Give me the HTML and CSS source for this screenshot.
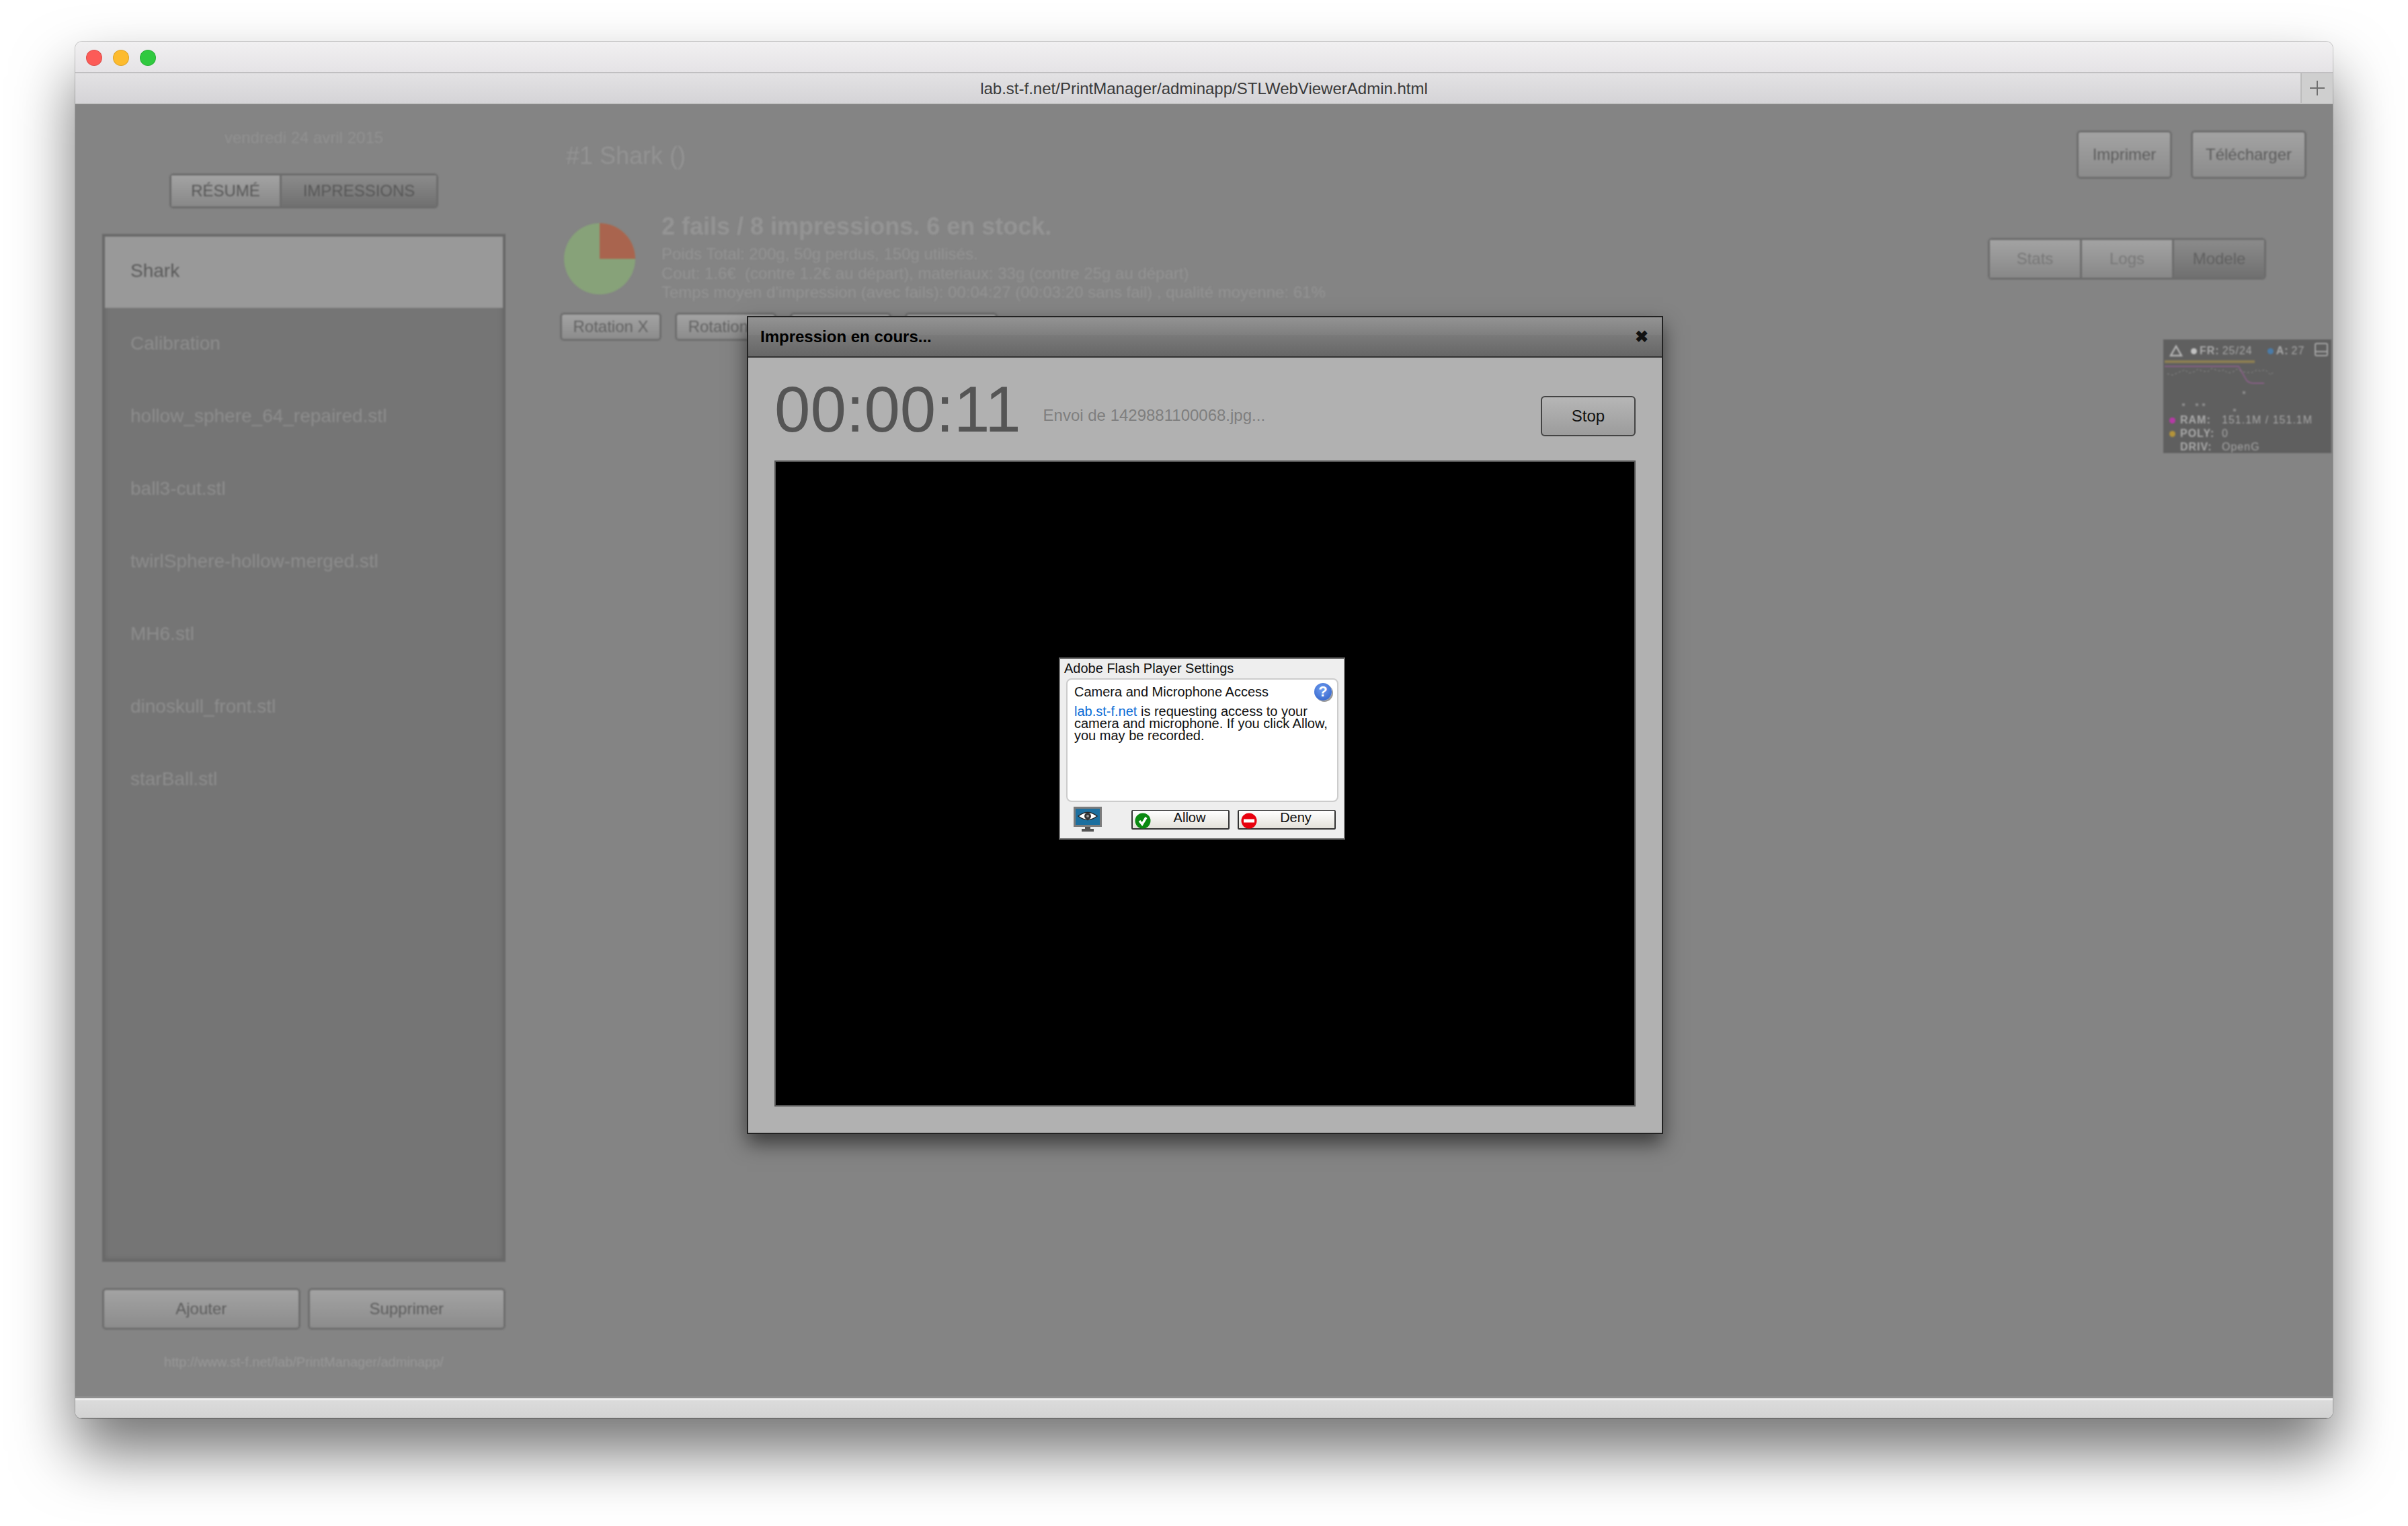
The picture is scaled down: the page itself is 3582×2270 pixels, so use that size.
FILE: index.html
```html
<!DOCTYPE html>
<html lang="fr">
<head>
  <meta charset="utf-8">
  <title>lab.st-f.net/PrintManager/adminapp/STLWebViewerAdmin.html</title>
  <link rel="stylesheet" href="styles.css">
</head>
<body>
  <div class="window">
    <div class="titlebar">
      <span class="light red"></span>
      <span class="light yellow"></span>
      <span class="light green"></span>
    </div>
    <div class="urlbar">
      <div class="url">lab.st-f.net/PrintManager/adminapp/STLWebViewerAdmin.html</div>
      <div class="newtab">
        <svg width="24" height="24" viewBox="0 0 24 24"><path d="M12 1v22M1 12h22" stroke="#6f6f6f" stroke-width="2" fill="none"/></svg>
      </div>
    </div>

    <div class="content">
      <div class="app">
        <div class="sidebar">
          <div class="date">vendredi 24 avril 2015</div>
          <div class="tabs side-tabs">
            <div class="tab on">RÉSUMÉ</div>
            <div class="tab off">IMPRESSIONS</div>
          </div>
          <ul class="list">
            <li class="selected">Shark</li>
            <li>Calibration</li>
            <li>hollow_sphere_64_repaired.stl</li>
            <li>ball3-cut.stl</li>
            <li>twirlSphere-hollow-merged.stl</li>
            <li>MH6.stl</li>
            <li>dinoskull_front.stl</li>
            <li>starBall.stl</li>
          </ul>
          <div class="side-buttons">
            <div class="btn">Ajouter</div>
            <div class="btn">Supprimer</div>
          </div>
          <div class="side-url">http://www.st-f.net/lab/PrintManager/adminapp/</div>
        </div>

        <div class="main">
          <div class="head">
            <h1>#1 Shark ()</h1>
            <div class="head-buttons">
              <div class="btn print">Imprimer</div>
              <div class="btn download">Télécharger</div>
            </div>
          </div>

          <div class="summary">
            <svg class="pie" width="106" height="106" viewBox="0 0 106 106">
              <circle cx="53" cy="53" r="53" fill="#87a279"/>
              <path d="M53 53V0A53 53 0 0 1 106 53Z" fill="#a9644e"/>
            </svg>
            <div class="stats-text">
              <h2>2 fails / 8 impressions. 6 en stock.</h2>
              <p>Poids Total: 200g, 50g perdus, 150g utilisés.</p>
              <p>Cout: 1.6€&nbsp; (contre 1.2€ au départ), materiaux: 33g (contre 25g au départ)</p>
              <p>Temps moyen d'impression (avec fails): 00:04:27 (00:03:20 sans fail) , qualité moyenne: 61%</p>
            </div>
            <div class="tabs view-tabs">
              <div class="tab on">Stats</div>
              <div class="tab on">Logs</div>
              <div class="tab off">Modele</div>
            </div>
          </div>

          <div class="rotations">
            <div class="btn rot">Rotation X</div>
            <div class="btn rot">Rotation Y</div>
            <div class="btn rot"></div>
            <div class="btn rot"></div>
          </div>

          <div class="perf">
            <div class="perf-top">
              <svg class="perf-logo" width="20" height="18" viewBox="0 0 20 18"><path d="M10 2 18 16H2Z" fill="none" stroke="#b4b4b4" stroke-width="2.5"/></svg>
              <span class="dot grey"></span><b>FR:</b><span class="val">25/24</span>
              <span class="dot blue"></span><b>A:</b><span class="val">27</span>
              <svg class="perf-win" width="20" height="20" viewBox="0 0 20 20"><rect x="1" y="1" width="18" height="18" rx="2" fill="none" stroke="#a5a5a5" stroke-width="2"/><path d="M1 13h18" stroke="#a5a5a5" stroke-width="2"/></svg>
            </div>
            <svg class="perf-graph" width="250" height="83" viewBox="0 0 250 83">
              <path d="M2 6H136" stroke="#8d7f52" stroke-width="4" fill="none"/>
              <path d="M2 13H112L124 34Q128 38 134 38H150" stroke="#865f85" stroke-width="2" fill="none"/>
              <path d="M6 24l8 2 8-4 6-2 4-2 6 5 8-2 6-4 6 3 8 1 6-5 8 3 6 1 4-2 6 5 8-2 6-4 8 4 6 1 8 0 8-4 4 2 8-2 8 8 4-6" stroke="#8c8c8c" stroke-width="1" stroke-dasharray="3 3" fill="none"/>
              <rect x="118" y="50" width="4" height="4" fill="#8a8a8a"/>
              <rect x="28" y="68" width="4" height="4" fill="#8a8a8a"/>
              <rect x="48" y="68" width="4" height="4" fill="#8a8a8a"/>
              <rect x="58" y="68" width="4" height="4" fill="#8a8a8a"/>
              <rect x="104" y="76" width="4" height="4" fill="#8a8a8a"/>
            </svg>
            <div class="perf-row"><span class="dot pink"></span><b>RAM:</b><span class="val">151.1M / 151.1M</span></div>
            <div class="perf-row"><span class="dot gold"></span><b>POLY:</b><span class="val">0</span></div>
            <div class="perf-row"><span class="dot"></span><b>DRIV:</b><span class="val">OpenG</span></div>
          </div>
        </div>
      </div>

      <div class="dialog">
        <div class="dialog-title">
          <span>Impression en cours...</span>
          <span class="close">✖</span>
        </div>
        <div class="dialog-body">
          <div class="timer-row">
            <div class="timer">00:00:11</div>
            <div class="status">Envoi de 1429881100068.jpg...</div>
            <div class="stop">Stop</div>
          </div>
          <div class="video">
            <div class="flash">
              <div class="flash-title">Adobe Flash Player Settings</div>
              <div class="flash-panel">
                <div class="flash-head">Camera and Microphone Access</div>
                <p class="flash-text"><span class="flash-link">lab.st-f.net</span> is requesting access to your<br>camera and microphone. If you click Allow,<br>you may be recorded.</p>
                <div class="help">?</div>
              </div>
              <div class="flash-foot">
                <svg class="cam" width="42" height="38" viewBox="0 0 42 38">
                  <rect x="0" y="0" width="42" height="30" fill="#7b7b7b"/>
                  <rect x="3" y="3" width="36" height="24" fill="#1c6f9f"/>
                  <path d="M7 14Q21 3 35 14Q21 25 7 14Z" fill="#fff" stroke="#222" stroke-width="1.5"/>
                  <circle cx="21" cy="14" r="5" fill="#333"/>
                  <circle cx="21" cy="14" r="2" fill="#999"/>
                  <path d="M17 30h8v3h5v4H12v-4h5Z" fill="#555"/>
                </svg>
                <div class="flash-btn allow">
                  <svg width="24" height="24" viewBox="0 0 24 24"><circle cx="12" cy="12" r="11.5" fill="#0b8a12"/><path d="M7 12l4 5 6-10" stroke="#fff" stroke-width="3.5" fill="none"/></svg>
                  <span>Allow</span>
                </div>
                <div class="flash-btn deny">
                  <svg width="24" height="24" viewBox="0 0 24 24"><circle cx="12" cy="12" r="11.5" fill="#e8000d"/><rect x="4" y="9.5" width="16" height="5" fill="#fff"/></svg>
                  <span>Deny</span>
                </div>
              </div>
            </div>
          </div>
        </div>
      </div>
    </div>

    <div class="bottombar"></div>
  </div>
</body>
</html>
```

FILE: styles.css
```css
* { box-sizing: border-box; }

html, body {
  margin: 0;
  background: #fff;
}

body {
  padding: 62px 112px 160px;
  font-family: "Liberation Sans", Arial, sans-serif;
}

.window {
  border-radius: 10px;
  overflow: hidden;
  box-shadow: 0 50px 90px rgba(0, 0, 0, .55), 0 0 0 1px rgba(0, 0, 0, .18);
}

/* browser chrome */
.titlebar {
  height: 47px;
  padding: 12px 16px;
  display: flex;
  gap: 16px;
  background: linear-gradient(#f1f0f1, #e5e3e6);
  border-bottom: 2px solid #c0bfc1;
}

.light {
  width: 24px;
  height: 24px;
  border-radius: 50%;
  border: 1px solid rgba(0, 0, 0, .12);
}

.red { background: #fc5b57; }
.yellow { background: #fdbb2e; }
.green { background: #30c93f; }

.urlbar {
  height: 46px;
  display: flex;
  background: linear-gradient(#e3e2e4, #d5d4d7);
  border-bottom: 2px solid #c4c4c4;
}

.url {
  flex: 1;
  padding-left: 48px;
  text-align: center;
  font-size: 24px;
  line-height: 45px;
  color: #3a3a3a;
}

.newtab {
  width: 48px;
  display: flex;
  align-items: center;
  justify-content: center;
  background: #cfcfcf;
  border-left: 2px solid #bcbcbc;
}

.bottombar {
  height: 33px;
  background: linear-gradient(#dcdcdc, #d3d3d3);
  border-top: 3px solid #8f8f8f;
  box-shadow: inset 0 3px 0 #eee;
  border-bottom: 1px solid #6f6f6f;
}

/* dimmed app */
.content {
  position: relative;
  background: #848484;
  overflow: hidden;
}

.app {
  display: flex;
  position: relative;
  height: 1922px;
  filter: blur(1.2px);
}

.sidebar {
  width: 640px;
  padding-left: 40px;
  display: flex;
  flex-direction: column;
}

.date {
  margin-top: 34px;
  line-height: 32px;
  font-size: 24px;
  text-align: center;
  color: #919191;
}

.tabs {
  display: flex;
  height: 52px;
  border: 3px solid #6c6c6c;
  border-radius: 6px;
  background: #6c6c6c;
  gap: 3px;
  font-size: 24px;
}

.tab {
  display: flex;
  align-items: center;
  justify-content: center;
  color: #565656;
}

.tab.on { background: linear-gradient(#a3a3a3, #888); }
.tab.off { background: linear-gradient(#8b8b8b, #707070); }

.side-tabs {
  margin: 37px auto 0;
  width: 400px;
}

.side-tabs .tab:first-child { width: 161px; }
.side-tabs .tab:last-child { flex: 1; }

.list {
  margin: 38px 0 0;
  padding: 0;
  list-style: none;
  height: 1529px;
  background: #757575;
  border: 4px solid #696969;
  box-shadow: inset 0 0 6px #666;
  font-size: 28px;
  color: #8d8d8d;
}

.list li {
  height: 108px;
  line-height: 108px;
  padding-left: 38px;
}

.list li.selected {
  height: 105px;
  line-height: 101px;
  background: #999;
  color: #5a5a5a;
  box-shadow: 0 1px 0 #979797;
}

.btn {
  display: flex;
  align-items: center;
  justify-content: center;
  font-size: 24px;
  color: #5c5c5c;
  border: 3px solid #6e6e6e;
  border-radius: 6px;
  background: linear-gradient(#a3a3a3, #8c8c8c);
}

.side-buttons {
  margin-top: 39px;
  display: flex;
  gap: 11px;
}

.side-buttons .btn {
  flex: 1;
  height: 62px;
}

.side-url {
  margin-top: 32px;
  line-height: 32px;
  font-size: 20px;
  text-align: center;
  color: #989898;
}

.main {
  flex: 1;
  padding-left: 81px;
  position: relative;
}

.head {
  display: flex;
  justify-content: space-between;
  padding: 39px 39px 0 9px;
}

h1 {
  margin: 0;
  height: 72px;
  font-size: 36px;
  font-weight: normal;
  line-height: 76px;
  color: #939393;
}

.head-buttons {
  display: flex;
  gap: 28px;
}

.head-buttons .btn { height: 72px; }
.print { width: 142px; }
.download { width: 172px; }

.summary {
  display: flex;
  margin-top: 50px;
  padding-left: 6px;
}

.pie {
  margin-top: 16px;
  margin-right: 39px;
  flex: none;
}

.stats-text {
  flex: 1;
  color: #939393;
  font-size: 24px;
}

h2 {
  margin: 0 0 6px;
  font-size: 36px;
  line-height: 42px;
  color: #949494;
}

.stats-text p {
  margin: 0;
  line-height: 28.5px;
}

.view-tabs {
  margin: 38px 99px 0 0;
  width: 414px;
  height: 62px;
  font-size: 24px;
}

.view-tabs .tab { flex: 1; color: #777; }
.view-tabs .tab.off { color: #5f5f5f; }

.rotations {
  display: flex;
  gap: 20px;
  margin-top: 15px;
}

.rot {
  height: 42px;
  width: 151px;
  color: #626262;
}

.rotations .rot:last-child { width: 138px; }

/* fps widget sits over the page */
.perf {
  position: absolute;
  top: 350px;
  right: 2px;
  width: 250px;
  height: 169px;
  background: #5f5f5f;
  color: #a6a6a6;
  font-size: 16px;
  letter-spacing: 1px;
}

.perf-top {
  height: 27px;
  display: flex;
  align-items: center;
  padding: 7px 6px 0 9px;
  gap: 4px;
  position: relative;
}

.perf-top .val { margin-right: 18px; }
.perf-logo { margin-right: 8px; }

.perf-win {
  position: absolute;
  right: 5px;
  top: 5px;
}

.perf-graph { display: block; }

.perf b { color: #aaa; }

.dot {
  width: 9px;
  height: 9px;
  border-radius: 50%;
  flex: none;
}

.dot.grey { background: #c2c2c2; }
.dot.blue { background: #4a7ba8; }
.dot.pink { background: #b53aa5; }
.dot.gold { background: #b3933a; }

.perf-row {
  display: flex;
  align-items: center;
  height: 20px;
  padding-left: 9px;
  gap: 7px;
}

.perf-row b { width: 55px; }

/* dialog */
.dialog {
  position: absolute;
  left: 999px;
  top: 315px;
  width: 1363px;
  border: 2px solid #222;
  background: #b1b1b1;
  box-shadow: 0 14px 28px rgba(0, 0, 0, .55);
}

.dialog-title {
  height: 60px;
  display: flex;
  justify-content: space-between;
  align-items: center;
  padding: 0 20px 0 18px;
  font-size: 24px;
  font-weight: bold;
  color: #000;
  background: linear-gradient(#939393, #7f7f7f 45%, #7a7a7a 46%, #666);
  border-bottom: 2px solid #333;
}

.close {
  font-size: 24px;
  color: #111;
}

.dialog-body { padding: 20px 39px 39px; }

.timer-row {
  height: 113px;
  display: flex;
  align-items: center;
  margin-bottom: 20px;
}

.timer {
  font-size: 96px;
  line-height: 113px;
  color: #555;
}

.status {
  flex: 1;
  margin: 18px 0 0 33px;
  font-size: 24px;
  color: #7f7f7f;
}

.stop {
  width: 141px;
  height: 60px;
  margin-top: 21px;
  display: flex;
  align-items: center;
  justify-content: center;
  font-size: 24px;
  color: #111;
  border: 2px solid #444;
  border-radius: 6px;
  background: linear-gradient(#b6b6b6, #9c9c9c);
}

.video {
  height: 961px;
  background: #000;
  border: 2px solid #555;
  padding: 291px 0 0 421px;
}

/* flash settings box */
.flash {
  width: 426px;
  height: 271px;
  background: #eee;
  border: 2px solid #666;
  font-size: 20px;
  color: #111;
}

.flash-title {
  height: 29px;
  line-height: 28px;
  padding-left: 6px;
}

.flash-panel {
  position: relative;
  height: 184px;
  margin: 0 8px 0 9px;
  padding: 6px 10px;
  background: #fff;
  border: 2px solid #ccc;
  border-radius: 8px;
}

.flash-head { line-height: 24px; }

.flash-text {
  margin: 8px 0 0;
  line-height: 18px;
}

.flash-link { color: #0a6cd6; }

.help {
  position: absolute;
  top: 5px;
  right: 8px;
  width: 26px;
  height: 26px;
  border-radius: 50%;
  background: radial-gradient(circle at 45% 35%, #6f9cf0, #2a5cc4);
  box-shadow: 2px 2px 0 #999;
  color: #fff;
  font-size: 22px;
  font-weight: bold;
  line-height: 26px;
  text-align: center;
}

.flash-foot {
  display: flex;
  align-items: flex-start;
  padding: 7px 0 0 20px;
}

.cam { margin-right: 44px; }

.flash-btn {
  width: 146px;
  height: 29px;
  margin-top: 5px;
  padding: 0 4px;
  display: flex;
  align-items: center;
  border: 2px solid #333;
  border-top-width: 1px;
  border-radius: 2px;
  background: linear-gradient(#fff, #e3e1da);
}

.flash-btn span {
  flex: 1;
  padding-left: 4px;
  text-align: center;
  margin-top: -6px;
}

.flash-btn svg {
  margin-top: 3px;
  margin-left: -1px;
  flex: none;
}

.allow { margin-right: 12px; }
```
